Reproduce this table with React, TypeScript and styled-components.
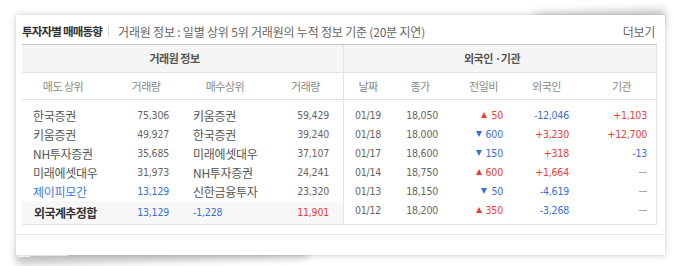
import React from "react";
import styled, { createGlobalStyle } from "styled-components";

const GlobalStyle = createGlobalStyle`
  body {
    margin: 0;
    background: #fff;
    font-family: "Noto Sans CJK KR", "Noto Sans", sans-serif;
  }
`;

const RED = "#ef3b34";
const BLUE = "#3a6fd8";

const Page = styled.div`
  width: 674px;
  height: 266px;
  padding: 15px 0 0 16px;
  box-sizing: border-box;
  overflow: hidden;
`;

const Paper = styled.div`
  position: relative;
  width: 649px;
  height: 240px;
  background: #fff;
  box-shadow: 0 0 8px rgba(0, 0, 0, 0.16), 0 0 2px rgba(0, 0, 0, 0.12);

  &::before {
    content: "";
    position: absolute;
    left: 2px;
    bottom: 2px;
    width: 45%;
    height: 14px;
    box-shadow: -2px 8px 8px rgba(0, 0, 0, 0.22);
    transform: rotate(-1.5deg);
    z-index: -1;
  }

  &::after {
    content: "";
    position: absolute;
    right: 2px;
    top: 2px;
    width: 20%;
    height: 14px;
    box-shadow: 2px -6px 8px rgba(0, 0, 0, 0.18);
    transform: rotate(-2deg);
    z-index: -1;
  }
`;

const Panel = styled.div`
  padding: 0 8px 9px 6px;
  border-bottom: 1px solid #ebebeb;
`;

const TitleBar = styled.div`
  display: flex;
  align-items: center;
  height: 26px;
  padding-top: 3px;
  border-bottom: 1px solid #c4c4c4;
`;

const Title = styled.h2`
  margin: 0;
  font-size: 11.5px;
  font-weight: 700;
  color: #333;
  letter-spacing: -0.8px;
`;

const Sep = styled.span`
  width: 1px;
  height: 11px;
  background: #d8d8d8;
  margin: 0 9px 0 6px;
`;

const Desc = styled.span`
  font-size: 12px;
  color: #666;
  flex: 1;
  letter-spacing: -0.2px;
`;

const More = styled.a`
  font-size: 12px;
  color: #666;
  margin-right: 2px;
  letter-spacing: -0.3px;
`;

const Board = styled.div`
  display: grid;
  grid-template-columns: 321px 1fr;
  border-right: 1px solid #e6e6e6;
  border-bottom: 1px solid #e3e3e3;
`;

const Section = styled.div<{ $divider?: boolean }>`
  border-left: ${({ $divider }) => ($divider ? "1px solid #e3e3e3" : "none")};
`;

const GroupHead = styled.div`
  height: 27px;
  line-height: 26px;
  background: #f5f5f5;
  border-bottom: 1px solid #e1e1e1;
  text-align: center;
  padding-right: 16px;
  font-size: 11px;
  font-weight: 700;
  color: #555;
  letter-spacing: -0.5px;
`;

const Row = styled.div<{ $cols: string; $h?: number; $summary?: boolean }>`
  display: grid;
  grid-template-columns: ${({ $cols }) => $cols};
  height: ${({ $h }) => $h ?? 19}px;
  line-height: ${({ $h }) => $h ?? 19}px;
  align-items: center;
  background: ${({ $summary }) => ($summary ? "#f7f7f7" : "transparent")};
`;

const HeadRow = styled(Row)`
  border-bottom: 1px solid #e1e1e1;
`;

const HeadCell = styled.div<{ $shift?: number }>`
  text-align: center;
  font-size: 11px;
  color: #888;
  letter-spacing: -0.5px;
  padding-left: ${({ $shift }) => $shift ?? 0}px;
`;

const Body = styled.div`
  padding-top: 6px;
`;

const Name = styled.div<{ $color?: string; $bold?: boolean }>`
  padding-left: ${({ $bold }) => ($bold ? 12 : 11)}px;
  font-size: 12px;
  font-weight: ${({ $bold }) => ($bold ? 700 : 400)};
  color: ${({ $color }) => $color ?? "#555"};
  letter-spacing: ${({ $bold }) => ($bold ? "-0.6px" : "-0.3px")};
  white-space: nowrap;
`;

const Num = styled.div<{ $color?: string; $pad: number; $align?: string; $lead?: number }>`
  text-align: ${({ $align }) => $align ?? "right"};
  padding-right: ${({ $pad }) => $pad}px;
  padding-left: ${({ $lead }) => $lead ?? 0}px;
  font-family: "DejaVu Sans Condensed", "DejaVu Sans", sans-serif;
  font-size: 10.5px;
  letter-spacing: -0.2px;
  color: ${({ $color }) => $color ?? "#666"};
  white-space: nowrap;
`;

const Arrow = styled.span<{ $up: boolean }>`
  display: inline-block;
  width: 0;
  height: 0;
  border-left: 3.5px solid transparent;
  border-right: 3.5px solid transparent;
  ${({ $up }) =>
    $up
      ? `border-bottom: 6px solid ${RED};`
      : `border-top: 6px solid ${BLUE};`}
  margin-right: 4px;
  vertical-align: 1px;
`;

const Dash = styled.span`
  display: inline-block;
  width: 8px;
  height: 1px;
  background: #aaa;
  vertical-align: 3px;
`;

const LEFT_COLS = "82px 78px 86px 75px";
const RIGHT_COLS = "48px 56px 67px 63px 1fr";

const brokers = [
  { sell: "한국증권", sv: "75,306", buy: "키움증권", bv: "59,429" },
  { sell: "키움증권", sv: "49,927", buy: "한국증권", bv: "39,240" },
  { sell: "NH투자증권", sv: "35,685", buy: "미래에셋대우", bv: "37,107" },
  { sell: "미래에셋대우", sv: "31,973", buy: "NH투자증권", bv: "24,241" },
  { sell: "제이피모간", sv: "13,129", buy: "신한금융투자", bv: "23,320", foreign: true },
];

type Day = { date: string; close: string; diff: string; up: boolean; frg: string; inst: string };

const days: Day[] = [
  { date: "01/19", close: "18,050", diff: "50", up: true, frg: "-12,046", inst: "+1,103" },
  { date: "01/18", close: "18,000", diff: "600", up: false, frg: "+3,230", inst: "+12,700" },
  { date: "01/17", close: "18,600", diff: "150", up: false, frg: "+318", inst: "-13" },
  { date: "01/14", close: "18,750", diff: "600", up: true, frg: "+1,664", inst: "" },
  { date: "01/13", close: "18,150", diff: "50", up: false, frg: "-4,619", inst: "" },
  { date: "01/12", close: "18,200", diff: "350", up: true, frg: "-3,268", inst: "" },
];

const signColor = (v: string) => (v.startsWith("-") ? BLUE : RED);

export default function App() {
  return (
    <Page>
      <GlobalStyle />
      <Paper>
        <Panel>
          <TitleBar>
            <Title>투자자별 매매동향</Title>
            <Sep />
            <Desc>거래원 정보 : 일별 상위 5위 거래원의 누적 정보 기준 (20분 지연)</Desc>
            <More>더보기</More>
          </TitleBar>
          <Board>
            <Section>
              <GroupHead>거래원 정보</GroupHead>
              <HeadRow $cols={LEFT_COLS} $h={26}>
                <HeadCell>매도 상위</HeadCell>
                <HeadCell $shift={6}>거래량</HeadCell>
                <HeadCell>매수상위</HeadCell>
                <HeadCell>거래량</HeadCell>
              </HeadRow>
              <Body>
                {brokers.map((b) => (
                  <Row key={b.sell} $cols={LEFT_COLS}>
                    <Name $color={b.foreign ? "#3d7ae2" : undefined}>{b.sell}</Name>
                    <Num $pad={13} $color={b.foreign ? BLUE : undefined}>{b.sv}</Num>
                    <Name>{b.buy}</Name>
                    <Num $pad={14}>{b.bv}</Num>
                  </Row>
                ))}
              </Body>
              <Row $cols={LEFT_COLS} $h={23} $summary>
                <Name $bold $color="#333">외국계추정합</Name>
                <Num $pad={13} $color={BLUE}>13,129</Num>
                <Num $pad={0} $lead={11} $align="left" $color={BLUE}>-1,228</Num>
                <Num $pad={14} $color={RED}>11,901</Num>
              </Row>
            </Section>
            <Section $divider>
              <GroupHead>외국인 ·기관</GroupHead>
              <HeadRow $cols={RIGHT_COLS} $h={26}>
                <HeadCell>날짜</HeadCell>
                <HeadCell>종가</HeadCell>
                <HeadCell $shift={4}>전일비</HeadCell>
                <HeadCell>외국인</HeadCell>
                <HeadCell $shift={9}>기관</HeadCell>
              </HeadRow>
              <Body>
                {days.map((d) => (
                  <Row key={d.date} $cols={RIGHT_COLS}>
                    <Num $pad={0} $align="center">{d.date}</Num>
                    <Num $pad={10}>{d.close}</Num>
                    <Num $pad={12} $color={d.up ? RED : BLUE}>
                      <Arrow $up={d.up} />
                      {d.diff}
                    </Num>
                    <Num $pad={9} $color={signColor(d.frg)}>{d.frg}</Num>
                    <Num $pad={9} $color={d.inst ? signColor(d.inst) : undefined}>
                      {d.inst || <Dash />}
                    </Num>
                  </Row>
                ))}
              </Body>
            </Section>
          </Board>
        </Panel>
      </Paper>
    </Page>
  );
}
